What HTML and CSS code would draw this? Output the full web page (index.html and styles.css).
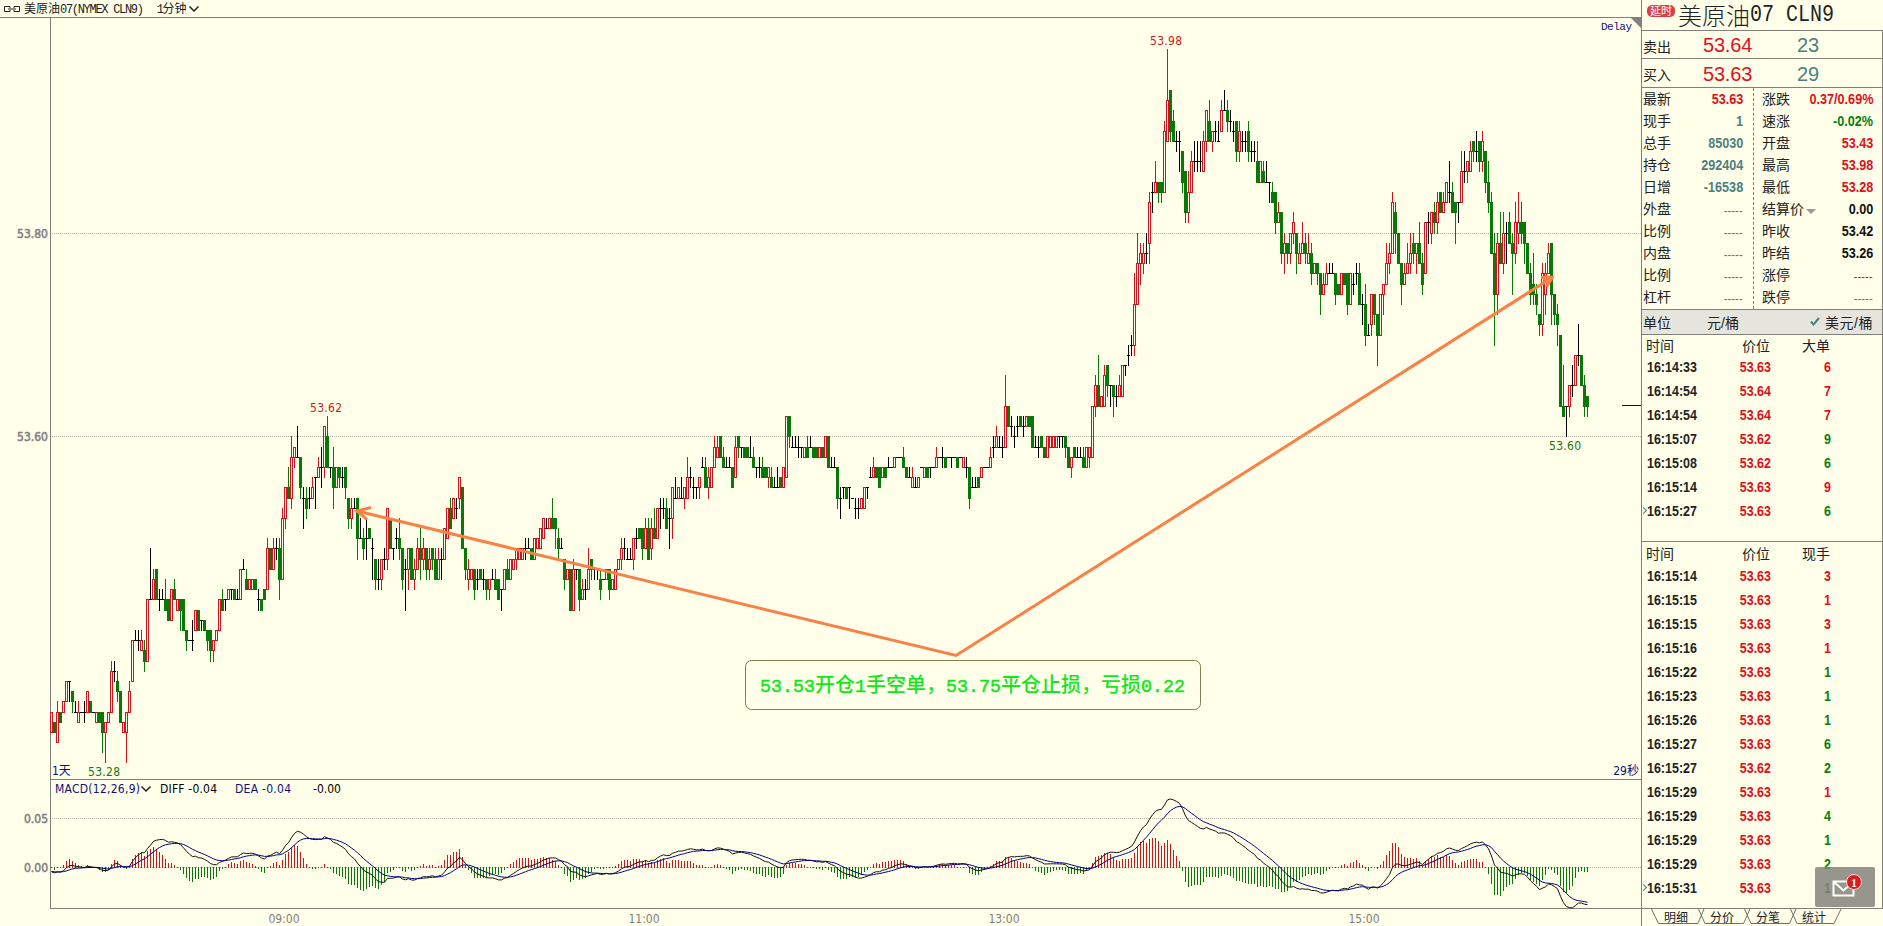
FILE: index.html
```html
<!DOCTYPE html>
<html lang="zh-CN">
<head>
  <meta charset="UTF-8">
  <meta name="viewport" content="width=device-width, initial-scale=1.0">
  <title>美原油07 CLN9</title>
  <link rel="stylesheet" href="styles.css">
</head>
<body>
  <div class="app">
    <main class="main">
      <header class="topbar">
        <svg class="link-icon" width="17" height="8" viewBox="0 0 17 8">
          <path d="M6 5V6.500H.500v-5H6V3M10 3V1.500h5.500v5H10V5M4 4h8" fill="none" stroke="#222"/>
        </svg>
        <span class="symbol">美原油<i>07(NYMEX CLN9)</i></span>
        <span class="period"><i>1</i>分钟</span>
        <svg width="10" height="6" viewBox="0 0 10 6"><path d="M.5.5L5 5 9.500.5" fill="none" stroke="#222" stroke-width="1.500"/></svg>
      </header>

      <svg id="chart" class="chart" width="1641" height="908" viewBox="0 18 1641 908">
        <!-- grid -->
        <g class="grid">
          <path d="M52 233.500H1641M52 436.500H1641M52 818.500H1641M52 867.500H1641"/>
        </g>
        <g class="frame">
          <path d="M50.500 18V908M50 779.500H1641M50 908.500H1641"/>
        </g>
        <g id="macd"></g>
        <g id="candles"></g>
        <path class="last" d="M1622 405.500H1641"/>
        <path class="corner" d="M1631 18H1641V28Z"/>

        <!-- axis labels -->
        <g class="axis bold">
          <text x="48" y="238" text-anchor="end">53.80</text>
          <text x="48" y="441" text-anchor="end">53.60</text>
          <text x="48" y="823" text-anchor="end">0.05</text>
          <text x="48" y="872" text-anchor="end">0.00</text>
        </g>
        <g class="axis">
          <text x="284" y="923" text-anchor="middle">09:00</text>
          <text x="644" y="923" text-anchor="middle">11:00</text>
          <text x="1004" y="923" text-anchor="middle">13:00</text>
          <text x="1364" y="923" text-anchor="middle">15:00</text>
        </g>
        <g class="mark">
          <text class="red" x="1166" y="45" text-anchor="middle" textLength="32">53.98</text>
          <text class="red" x="326" y="412" text-anchor="middle" textLength="32">53.62</text>
          <text class="green" x="104" y="776" text-anchor="middle" textLength="32">53.28</text>
          <text class="green" x="1565" y="450" text-anchor="middle" textLength="32">53.60</text>
          <text class="navy" x="52" y="775">1天</text>
          <text class="navy" x="1639" y="775" text-anchor="end">29秒</text>
          <text class="navy delay" x="1632" y="30" text-anchor="end" textLength="31">Delay</text>
          <text class="navy" x="55" y="793" textLength="85">MACD(12,26,9)</text>
          <path class="caret" d="M141.500 786.500l4.500 4.500 4.500-4.500"/>
          <text x="160" y="793" textLength="57">DIFF -0.04</text>
          <text class="navy" x="235" y="793" textLength="56">DEA -0.04</text>
          <text x="313" y="793">-0.00</text>
        </g>

        <!-- trade note -->
        <g class="note">
          <path d="M357 511L956 655.500L1553 277"/>
          <path d="M371 507.500L357 511L367 519.500"/>
          <path d="M1541 277.500L1552 277L1546.500 287M1543 279l8 1-4 5"/>
          <rect x="745.500" y="660.500" width="455" height="49" rx="6"/>
          <text x="760" y="692"><tspan class="num">53.53</tspan>开仓<tspan class="num">1</tspan>手空单，<tspan class="num">53.75</tspan>平仓止损，亏损<tspan class="num">0.22</tspan></text>
        </g>
      </svg>
    </main>

    <aside class="side">
      <h1 class="title"><span class="tag">延时</span>美原油<i>07 CLN9</i></h1>
      <div class="quote ask"><span>卖出</span><b class="red">53.64</b><b class="teal">23</b></div>
      <div class="quote bid"><span>买入</span><b class="red">53.63</b><b class="teal">29</b></div>

      <div class="info">
        <dl>
          <div><dt>最新</dt><dd class="red">53.63</dd></div>
          <div><dt>现手</dt><dd class="teal">1</dd></div>
          <div><dt>总手</dt><dd class="teal">85030</dd></div>
          <div><dt>持仓</dt><dd class="teal">292404</dd></div>
          <div><dt>日增</dt><dd class="teal">-16538</dd></div>
          <div><dt>外盘</dt><dd class="teal none">-----</dd></div>
          <div><dt>比例</dt><dd class="teal none">-----</dd></div>
          <div><dt>内盘</dt><dd class="teal none">-----</dd></div>
          <div><dt>比例</dt><dd class="teal none">-----</dd></div>
          <div><dt>杠杆</dt><dd class="teal none">-----</dd></div>
        </dl>
        <dl>
          <div><dt>涨跌</dt><dd class="red">0.37/0.69%</dd></div>
          <div><dt>速涨</dt><dd class="green">-0.02%</dd></div>
          <div><dt>开盘</dt><dd class="red">53.43</dd></div>
          <div><dt>最高</dt><dd class="red">53.98</dd></div>
          <div><dt>最低</dt><dd class="red">53.28</dd></div>
          <div><dt class="drop">结算价</dt><dd>0.00</dd></div>
          <div><dt>昨收</dt><dd>53.42</dd></div>
          <div><dt>昨结</dt><dd>53.26</dd></div>
          <div><dt>涨停</dt><dd class="red none">-----</dd></div>
          <div><dt>跌停</dt><dd class="teal none">-----</dd></div>
        </dl>
      </div>

      <div class="unit">
        <span>单位</span><span class="cny">元/桶</span>
        <svg width="10" height="9" viewBox="0 0 10 9"><path d="M1 4.500L3.500 7.500 9 1" fill="none" stroke="#4a8080" stroke-width="2"/></svg>
        <span class="usd">美元/桶</span>
      </div>

      <div class="ticks big">
        <div class="row head"><span>时间</span><span>价位</span><span>大单</span></div>
        <div class="row"><span>16:14:33</span><span>53.63</span><span class="red">6</span></div>
        <div class="row"><span>16:14:54</span><span>53.64</span><span class="red">7</span></div>
        <div class="row"><span>16:14:54</span><span>53.64</span><span class="red">7</span></div>
        <div class="row"><span>16:15:07</span><span>53.62</span><span class="green">9</span></div>
        <div class="row"><span>16:15:08</span><span>53.62</span><span class="green">6</span></div>
        <div class="row"><span>16:15:14</span><span>53.63</span><span class="red">9</span></div>
        <div class="row now"><span>16:15:27</span><span>53.63</span><span class="green">6</span></div>
      </div>

      <div class="ticks all">
        <div class="row head"><span>时间</span><span>价位</span><span>现手</span></div>
        <div class="row"><span>16:15:14</span><span>53.63</span><span class="red">3</span></div>
        <div class="row"><span>16:15:15</span><span>53.63</span><span class="red">1</span></div>
        <div class="row"><span>16:15:15</span><span>53.63</span><span class="red">3</span></div>
        <div class="row"><span>16:15:16</span><span>53.63</span><span class="red">1</span></div>
        <div class="row"><span>16:15:22</span><span>53.63</span><span class="green">1</span></div>
        <div class="row"><span>16:15:23</span><span>53.63</span><span class="green">1</span></div>
        <div class="row"><span>16:15:26</span><span>53.63</span><span class="green">1</span></div>
        <div class="row"><span>16:15:27</span><span>53.63</span><span class="green">6</span></div>
        <div class="row"><span>16:15:27</span><span>53.62</span><span class="green">2</span></div>
        <div class="row"><span>16:15:29</span><span>53.63</span><span class="red">1</span></div>
        <div class="row"><span>16:15:29</span><span>53.63</span><span class="green">4</span></div>
        <div class="row"><span>16:15:29</span><span>53.63</span><span class="green">1</span></div>
        <div class="row"><span>16:15:29</span><span>53.63</span><span class="green">2</span></div>
        <div class="row now"><span>16:15:31</span><span>53.63</span><span class="green">1</span></div>
      </div>

      <nav class="tabs">
        <svg class="tab-lines" width="200" height="16" viewBox="0 0 200 16">
          <path d="M9.500 0L16.500 14.500H56L62 0M56.500 0L63 14.500H101.500L108 0M102.500 0L109 14.500H147.500L154 0M148.500 0L155 14.500H192L199 0"/>
        </svg>
        <a>明细</a><a>分价</a><a>分笔</a><a>统计</a>
      </nav>

      <div class="mail">
        <svg width="60" height="40" viewBox="0 0 60 40">
          <path d="M18.500 14.500h20v14h-20zM19 15l9.500 8.500L38 15" fill="none" stroke="#fff" stroke-width="2"/>
          <circle cx="39" cy="15" r="7.500" fill="#e01822" stroke="#f4dcd4"/>
          <text x="39" y="19.500" text-anchor="middle">1</text>
        </svg>
      </div>
    </aside>
  </div>

  <script src="chart.js"></script>
</body>
</html>
```

FILE: styles.css
```css
body {
  margin: 0;
  background: #ffffea;
  color: #222;
  font-family: "Liberation Sans", "Noto Sans CJK SC", sans-serif;
  overflow: hidden;
}

i {
  font-style: normal;
}

.app {
  display: flex;
  width: 1883px;
  height: 926px;
}

.main {
  width: 1641px;
}

.topbar {
  display: flex;
  align-items: center;
  box-sizing: border-box;
  height: 18px;
  padding-left: 4px;
  border-bottom: 1px solid #808078;
  font: 12px/16px "Noto Sans CJK SC", sans-serif;
}

.topbar i {
  font-family: "Liberation Mono", monospace;
  letter-spacing: -1.3px;
}

.link-icon {
  margin-right: 3px;
}

.period {
  margin: 0 2px 0 14px;
}

/* chart */
.chart {
  display: block;
  font: 12px "DejaVu Sans Condensed", "DejaVu Sans", "Noto Sans CJK SC", sans-serif;
  font-stretch: condensed;
}

.grid path {
  stroke: #b4b4a8;
  stroke-dasharray: 1 1;
  shape-rendering: crispEdges;
}

.frame path {
  fill: none;
  stroke: #808078;
  shape-rendering: crispEdges;
}

.axis {
  fill: #808080;
}

.axis.bold {
  stroke: #808080;
  stroke-width: 0.5px;
}

.bar {
  fill: none;
  shape-rendering: crispEdges;
}

.bar.up {
  stroke: #d2141e;
}

.bar.down {
  stroke: #087808;
}

.bar.flat {
  stroke: #000;
}

.line {
  fill: none;
}

.diff {
  stroke: #111;
}

.dea {
  stroke: #000080;
}

.last {
  stroke: #000080;
}

.corner {
  fill: #808080;
}

.mark .navy {
  fill: #10107c;
}

.mark .red {
  fill: #d01820;
}

.mark .green {
  fill: #107810;
}

.mark .delay {
  font: 11px "Liberation Mono", monospace;
}

.caret {
  fill: none;
  stroke: #222;
  stroke-width: 1.5px;
}

.note path {
  fill: none;
  stroke: #f98046;
  stroke-width: 3px;
}

.note rect {
  fill: none;
  stroke: #80804c;
}

.note text {
  fill: #14e61e;
  font: 500 20px "Noto Sans CJK SC", sans-serif;
}

.note .num {
  font: 18.33px "Liberation Mono", monospace;
  stroke: #14e61e;
  stroke-width: 0.5px;
}

/* side panel */
.side {
  position: relative;
  display: flex;
  flex-direction: column;
  box-sizing: border-box;
  width: 242px;
  border-left: 1px solid #808078;
}

.side > div,
.title {
  box-sizing: border-box;
  border-bottom: 1px solid #808078;
}

.red {
  color: #e0101c;
}

.green {
  color: #088010;
}

.teal {
  color: #4c8080;
}

.title {
  display: flex;
  align-items: center;
  height: 31px;
  margin: 0;
  padding-left: 5px;
  font: 300 24px/34px "Noto Sans CJK SC", sans-serif;
  white-space: pre;
}

.title i {
  font: 24px/34px "Liberation Mono", monospace;
  transform: scaleX(0.833);
  transform-origin: left;
}

.tag {
  align-self: flex-start;
  width: 28px;
  height: 12px;
  margin: 5px 3px 0 0;
  border-radius: 5px;
  background: #d84048;
  color: #fff;
  font-size: 11px;
  font-weight: 400;
  line-height: 11px;
  text-align: center;
}

.side > .quote,
.side > .info,
.side > .unit,
.side > .ticks {
  border-right: 1px solid #808078;
}

.quote {
  display: grid;
  grid-template-columns: 60px 94px auto;
  align-items: center;
  padding: 2px 0 0 1px;
  font-size: 14px;
}

.quote b {
  font-size: 20px;
  font-weight: normal;
  letter-spacing: -0.2px;
}

.ask {
  height: 28px;
}

.bid {
  height: 29px;
}

.info {
  display: grid;
  grid-template-columns: 111px 1fr;
  height: 222px;
}

.info dl {
  margin: 0;
  padding: 0 10px 0 1px;
}

.info dl + dl {
  padding: 0 9px 0 8px;
  border-left: 1px dashed #808078;
}

.info dl div {
  display: flex;
  justify-content: space-between;
  height: 22px;
  line-height: 22px;
}

dt {
  font-size: 14px;
}

dd {
  margin: 0;
  color: #111;
  font-size: 14.5px;
  font-weight: bold;
  transform: scaleX(0.87);
  transform-origin: right;
}

dd.red {
  color: #e0101c;
}

dd.green {
  color: #088010;
}

dd.teal {
  color: #4c8080;
}

dd.none {
  font-size: 13px;
  font-weight: normal;
  padding-top: 2px;
}

.drop::after {
  content: "";
  display: inline-block;
  margin-left: 2px;
  border: 5px solid transparent;
  border-top-color: #999;
  border-bottom: 0;
}

.unit {
  display: flex;
  align-items: center;
  height: 25px;
  padding: 0 9px 1px 1px;
  background: #e6e5dd;
  font-size: 14px;
}

.unit .cny {
  margin: 0 auto 0 36px;
}

.unit svg {
  margin-right: 5px;
}

.unit .usd {
  letter-spacing: 0.5px;
}

.ticks {
  padding-top: 2px;
}

.big {
  height: 207px;
}

.all {
  height: 367px;
}

.row {
  position: relative;
  display: grid;
  grid-template-columns: 66px 58px 60px;
  height: 24px;
  padding-left: 5px;
  font-size: 14.5px;
  font-weight: bold;
  line-height: 24px;
}

.row span {
  transform: scaleX(0.86);
  transform-origin: left;
}

.row span + span {
  text-align: right;
  transform-origin: right;
}

.row span:nth-child(2) {
  color: #e0101c;
}

.row.head {
  height: 20px;
  padding-left: 4px;
  font-size: 14px;
  font-weight: normal;
  line-height: 20px;
}

.big .head {
  height: 18px;
  line-height: 18px;
}

.row.head span {
  color: #222;
  transform: none;
}

.now::before {
  content: "";
  position: absolute;
  left: -1px;
  top: 9px;
  width: 4px;
  height: 4px;
  border: solid #4c8080;
  border-width: 1.5px 1.5px 0 0;
  transform: rotate(45deg);
}

.tabs {
  position: relative;
  display: flex;
  height: 17px;
  padding-left: 11px;
}

.tabs a {
  width: 46px;
  font: 12px/15px "Noto Sans CJK SC", sans-serif;
  text-align: center;
}

.tab-lines {
  position: absolute;
  left: 0;
  top: 0;
}

.tab-lines path {
  fill: none;
  stroke: #707068;
}

.side > .mail {
  position: absolute;
  left: 173px;
  top: 867px;
  width: 60px;
  height: 40px;
  border: 0;
  border-radius: 2px;
  background: rgba(132, 132, 124, 0.85);
}

.mail text {
  fill: #fff;
  font: bold 12px "Liberation Serif", serif;
}
```

FILE: chart.js
```js
// one token per minute: open, close (cents above 53.00), upper wick, lower wick
const data = `
313300 323100 303310 333200 333400 343600 363602 353401 333310 323310
333300 333311 333500 343300 333300 323300 333200 333102 313203 323300
333710 373711 363511 353200 313200 313303 333510 364000 404010 404011
394010 393811 384400 444450 444610 474400 444411 444410 444320 444200
424500 454410 434400 444302 444100 414001 404000 404021 414300 434100
424201 424100 414001 413901 394001 404100 414400 444310 444401 444500
454501 454400 444410 444700 474710 464510 454600 454600 464500 444411
444300 454400 454910 494700 474910 494911 494612 465210 525501 555420
545821 585901 585830 585501 545413 545311 545411 545510 565603 565710
575722 576101 605720 575701 575522 555700 575601 565611 575501 545201
525311 535310 545002 505020 504911 505022 515000 494913 484601 464621
464801 484811 485301 524900 494901 505011 504921 494601 474714 474902
494600 464711 474910 494822 484911 494701 474811 494801 484610 464810
484812 485100 505300 535110 525400 535311 545601 554900 494701 464711
464700 474501 464611 474600 464611 464501 454601 464610 464510 464400
454502 454700 474610 464800 474800 484901 484900 484900 494911 494910
494800 485000 495000 495100 505200 515110 515200 525120 525102 504911
494910 484601 464700 474300 434710 474701 474401 444510 454511 454720
484701 474701 474701 464511 464600 464700 474501 454600 454700 474800
484911 494911 484810 484810 485001 505011 515000 514901 495110 514810
495111 515020 505300 535312 535311 535110 525213 525502 545420 545500
545420 545501 545620 565611 555511 555501 555601 575710 575510 555611
555700 575910 585910 605800 585710 575710 575710 575500 565910 605901
595901 595800 595800 585820 585710 575701 575711 575610 575600 565701
565510 555510 555520 565500 555700 566200 626001 595910 595910 595911
595901 585900 595810 595910 595800 595800 585900 595800 586000 605700
575710 575710 575401 545412 555501 555400 555502 545400 535311 535311
535400 535500 555501 565610 565710 575600 575500 565700 575600 575710
575700 575800 585800 585800 585710 575600 565610 555610 555510 555600
575700 565700 575600 575701 575700 575810 585800 585811 585700 585800
585801 585800 585700 585800 575800 575711 575401 555510 555510 565500
565700 575700 575700 575810 595911 596010 595910 595911 596330 636100
616111 606011 616111 626100 616111 616200 626100 625900 595910 595911
605900 595800 586000 596000 596000 596000 606001 606001 605901 595700
575801 595800 585810 585810 585710 575900 585901 586300 636511 656330
636400 636610 676501 656502 656402 646411 646510 646700 676701 686811
696911 697331 737730 777812 777811 787821 798312 848412 848520 858401
858401 849010 899350 949001 918910 898911 898913 888501 868201 828421
848710 878721 878721 878721 868910 899201 918920 899001 909011 898920
909210 929220 929111 919111 909011 918801 889011 898911 898911 908811
888811 888811 878520 858700 868510 858520 858502 848310 848101 818210
827801 787912 797801 788001 808111 807802 777810 787920 797811 777820
787611 767700 777601 767402 747510 757610 767610 767610 767401 757400
747600 767500 767301 737600 757511 767611 767310 737312 737021 707010
717401 747201 727003 707400 747502 757720 777811 788310 828012 807700
777502 757610 767720 777821 797811 787902 797720 777511 768100 818112
808201 828111 818311 848200 828310 838500 848431 848210 838203 838302
838620 868621 868701 868810 898801 888821 898701 878911 888501 858321
837810 787425 747912 797730 778021 808013 817910 797814 788121 808131
818021 817902 797600 767411 757431 747311 727101 717611 747612 767810
797403 747201 727112 706300 636240 636303 636501 656521 656800 686831
686500 656311 646301
`.trim().split(/\s+/);

const STEP = 3;
const LEFT = 51;
const py = p => Math.round(436.4 - (p - 60) * 10.19);
const my = v => 867.5 - v * 980;

function addPath(parent, cls, d) {
  const path = document.createElementNS("http://www.w3.org/2000/svg", "path");
  path.setAttribute("class", cls);
  path.setAttribute("d", d);
  document.getElementById(parent).appendChild(path);
}

// candles
const bars = { up: "", down: "", flat: "" };
const closes = [];
data.forEach((t, i) => {
  const open = +t.slice(0, 2);
  const close = +t.slice(2, 4);
  const high = Math.max(open, close) + +t[4];
  const low = Math.min(open, close) - +t[5];
  const x = LEFT + i * STEP;
  const top = py(Math.max(open, close));
  const bottom = py(Math.min(open, close));
  closes.push(close / 100);

  if (open === close) {
    bars.flat += `M${x - 1} ${top + 0.5}h3M${x + 0.5} ${py(high)}V${py(low) + 1}`;
  } else if (close > open) {
    bars.up += `M${x - 0.5} ${top + 0.5}h2V${bottom + 0.5}h-2Z`;
    bars.up += `M${x + 0.5} ${py(high)}V${top}M${x + 0.5} ${bottom}V${py(low) + 1}`;
  } else {
    for (let k = -1; k < 2; k++) {
      bars.down += `M${x + k + 0.5} ${top}V${bottom + 1}`;
    }
    bars.down += `M${x + 0.5} ${py(high)}V${py(low) + 1}`;
  }
});
for (const k in bars) addPath("candles", "bar " + k, bars[k]);

// MACD(12,26,9)
let fast = closes[0] - 0.003;
let slow = closes[0] + 0.002;
let dea = -0.004;
let diffLine = "";
let deaLine = "";
const hist = { up: "", down: "" };
closes.forEach((c, i) => {
  fast += (c - fast) * 2 / 13;
  slow += (c - slow) * 2 / 27;
  const diff = fast - slow;
  dea += (diff - dea) * 0.2;
  const x = LEFT + i * STEP + 0.5;
  const h = 2 * (diff - dea);
  diffLine += `${i ? "L" : "M"}${x} ${my(diff).toFixed(1)}`;
  deaLine += `${i ? "L" : "M"}${x} ${my(dea).toFixed(1)}`;
  hist[h > 0 ? "up" : "down"] += `M${x} ${h > 0 ? 868 : 867}V${Math.round(my(h))}`;
});
addPath("macd", "bar up", hist.up);
addPath("macd", "bar down", hist.down);
addPath("macd", "line diff", diffLine);
addPath("macd", "line dea", deaLine);
```
